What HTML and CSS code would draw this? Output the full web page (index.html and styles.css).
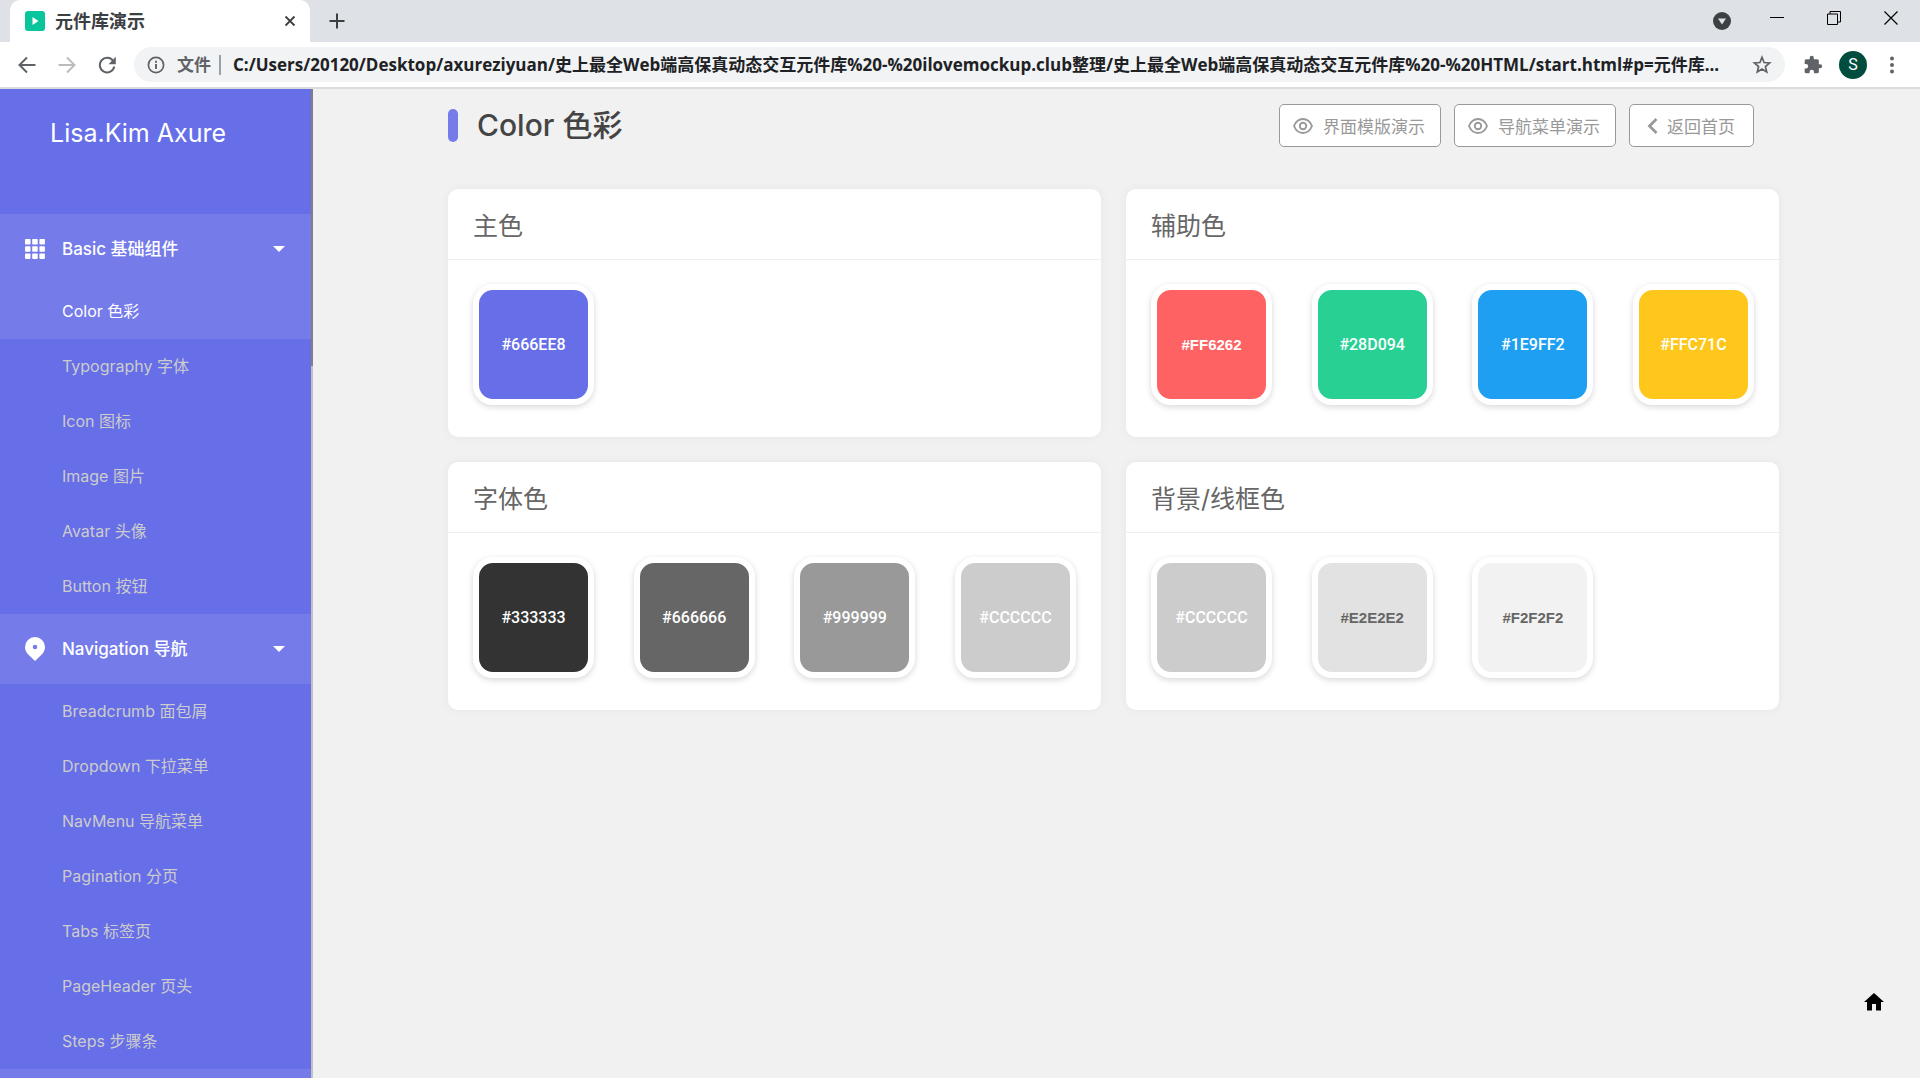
FILE: index.html
```html
<!DOCTYPE html>
<html lang="zh-CN">
<head>
<meta charset="utf-8">
<title>元件库演示</title>
<meta name="viewport" content="width=device-width, initial-scale=1">
<link rel="stylesheet" href="styles.css">
</head>
<body>
<header class="browser">
  <div class="tabstrip">
    <div class="tab">
      <svg class="favicon" width="20" height="20" viewBox="0 0 20 20" aria-hidden="true"><rect width="20" height="20" rx="3" fill="#08c59b"/><path d="M7.500 6l6 4-6 4z" fill="#fff"/></svg>
      <span class="tab-title">元件库演示</span>
      <button class="icon-btn tab-close" aria-label="关闭标签页"><svg width="12" height="12" viewBox="0 0 12 12"><path d="M1.500 1.500l9 9M10.500 1.500l-9 9" stroke="#3c4043" stroke-width="1.800"/></svg></button>
    </div>
    <button class="icon-btn new-tab" aria-label="新标签页"><svg width="16" height="16" viewBox="0 0 16 16"><path d="M8 .5v15M.5 8h15" stroke="#3c4043" stroke-width="2"/></svg></button>
    <div class="window-controls">
      <button class="icon-btn tab-search" aria-label="搜索标签页"><svg width="18" height="18" viewBox="0 0 18 18"><circle cx="9" cy="9" r="9" fill="#3c4043"/><path d="M5 6.500h8l-4 6z" fill="#dee1e6"/></svg></button>
      <button class="icon-btn raised" aria-label="最小化"><svg width="14" height="14" viewBox="0 0 14 14"><path d="M0 6.500h14" stroke="#000"/></svg></button>
      <button class="icon-btn raised" aria-label="还原"><svg width="14" height="14" viewBox="0 0 14 14" fill="none" stroke="#000"><path d="M.5 3h10v10.500h-10zM3 3V.5h10.500V11h-3"/></svg></button>
      <button class="icon-btn raised" aria-label="关闭"><svg width="14" height="14" viewBox="0 0 14 14"><path d="M.5.5l13 13M13.500.5l-13 13" stroke="#000" stroke-width="1.200"/></svg></button>
    </div>
  </div>
  <div class="toolbar">
    <div class="history">
      <button class="icon-btn" aria-label="后退"><svg width="18" height="18" viewBox="0 0 18 18" fill="none" stroke="#5f6368" stroke-width="2"><path d="M17.500 9H2M9 1.500L1.500 9 9 16.500"/></svg></button>
      <button class="icon-btn" aria-label="前进"><svg width="18" height="18" viewBox="0 0 18 18" fill="none" stroke="#babcbe" stroke-width="2"><path d="M.5 9H16M9 1.500L16.500 9 9 16.500"/></svg></button>
      <button class="icon-btn" aria-label="重新加载"><svg width="18" height="18" viewBox="0 0 18 18"><path d="M15.200 5A7.300 7.300 0 1 0 16.300 10.500" fill="none" stroke="#5f6368" stroke-width="2"/><path d="M17.800.8v7.400h-7.300z" fill="#5f6368"/></svg></button>
    </div>
    <div class="omnibox">
      <svg width="18" height="18" viewBox="0 0 18 18" fill="none" stroke="#5f6368" stroke-width="1.700" aria-hidden="true"><circle cx="9" cy="9" r="7.600"/><path d="M9 8v5M9 4.800v1.900" stroke-width="1.900"/></svg>
      <label class="scheme" for="url">文件</label>
      <input id="url" class="url" type="text" value="C:/Users/20120/Desktop/axureziyuan/史上最全Web端高保真动态交互元件库%20-%20ilovemockup.club整理/史上最全Web端高保真动态交互元件库%20-%20HTML/start.html#p=元件库...">
      <button class="icon-btn" aria-label="收藏"><svg width="20" height="20" viewBox="0 0 20 20" fill="none" stroke="#5f6368" stroke-width="1.700"><path d="M10 2.300l2.100 5.200 5.500.4-4.200 3.600 1.300 5.500-4.700-3-4.700 3 1.300-5.500-4.200-3.600 5.500-.4z"/></svg></button>
    </div>
    <div class="extras">
      <button class="icon-btn" aria-label="扩展程序"><svg width="20" height="20" viewBox="0 0 24 24" fill="#5f6368"><path d="M20.500 11H19V7a2 2 0 0 0-2-2h-4V3.500a2.500 2.500 0 0 0-5 0V5H4a2 2 0 0 0-2 2v3.800h1.500a2.700 2.700 0 0 1 0 5.400H2V20a2 2 0 0 0 2 2h3.800v-1.500a2.700 2.700 0 0 1 5.400 0V22H17a2 2 0 0 0 2-2v-4h1.500a2.500 2.500 0 0 0 0-5z"/></svg></button>
      <button class="profile" aria-label="个人资料">S</button>
      <button class="icon-btn" aria-label="菜单"><svg width="18" height="18" viewBox="0 0 18 18" fill="#5f6368"><circle cx="9" cy="2.500" r="2"/><circle cx="9" cy="9" r="2"/><circle cx="9" cy="15.500" r="2"/></svg></button>
    </div>
  </div>
</header>

<div class="app">
  <aside class="sidebar">
    <div class="brand">Lisa.Kim Axure</div>
    <nav>
      <button class="group">
        <svg width="20" height="20" viewBox="0 0 20 20" fill="#fff" aria-hidden="true"><rect width="5.500" height="5.500" rx=".8"/><rect x="7.200" width="5.500" height="5.500" rx=".8"/><rect x="14.400" width="5.500" height="5.500" rx=".8"/><rect y="7.200" width="5.500" height="5.500" rx=".8"/><rect x="7.200" y="7.200" width="5.500" height="5.500" rx=".8"/><rect x="14.400" y="7.200" width="5.500" height="5.500" rx=".8"/><rect y="14.400" width="5.500" height="5.500" rx=".8"/><rect x="7.200" y="14.400" width="5.500" height="5.500" rx=".8"/><rect x="14.400" y="14.400" width="5.500" height="5.500" rx=".8"/></svg>
        <span class="group-name">Basic 基础组件</span>
        <span class="caret"></span>
      </button>
      <a class="item active" href="#color">Color 色彩</a>
      <a class="item" href="#typography">Typography 字体</a>
      <a class="item" href="#icon">Icon 图标</a>
      <a class="item" href="#image">Image 图片</a>
      <a class="item" href="#avatar">Avatar 头像</a>
      <a class="item" href="#button">Button 按钮</a>
      <button class="group">
        <svg width="20" height="24" viewBox="0 0 20 24" aria-hidden="true"><path fill="#fff" fill-rule="evenodd" d="M10 0a10 10 0 0 1 10 10c0 3.200-1.300 5.300-3 7.200L10 24l-7-6.800C1.300 15.300 0 13.200 0 10A10 10 0 0 1 10 0zm0 7.700a2.300 2.300 0 1 0 0 4.600 2.300 2.300 0 0 0 0-4.600z"/></svg>
        <span class="group-name">Navigation 导航</span>
        <span class="caret"></span>
      </button>
      <a class="item" href="#breadcrumb">Breadcrumb 面包屑</a>
      <a class="item" href="#dropdown">Dropdown 下拉菜单</a>
      <a class="item" href="#navmenu">NavMenu 导航菜单</a>
      <a class="item" href="#pagination">Pagination 分页</a>
      <a class="item" href="#tabs">Tabs 标签页</a>
      <a class="item" href="#pageheader">PageHeader 页头</a>
      <a class="item" href="#steps">Steps 步骤条</a>
      <div class="group"></div>
    </nav>
  </aside>
  <div class="scroll-track"><div class="scroll-thumb"></div></div>

  <main class="content">
    <div class="page-head">
      <h1>Color 色彩</h1>
      <div class="actions">
        <button class="action"><svg width="20" height="16" viewBox="0 0 20 16" fill="none" stroke="#999" stroke-width="1.900" aria-hidden="true"><path d="M1 8c1.800-4.400 5-7 9-7s7.200 2.600 9 7c-1.800 4.400-5 7-9 7S2.800 12.400 1 8z"/><circle cx="10" cy="8" r="3.200"/></svg>界面模版演示</button>
        <button class="action"><svg width="20" height="16" viewBox="0 0 20 16" fill="none" stroke="#999" stroke-width="1.900" aria-hidden="true"><path d="M1 8c1.800-4.400 5-7 9-7s7.200 2.600 9 7c-1.800 4.400-5 7-9 7S2.800 12.400 1 8z"/><circle cx="10" cy="8" r="3.200"/></svg>导航菜单演示</button>
        <button class="action back"><svg width="11" height="16" viewBox="0 0 11 16" fill="none" stroke="#999" stroke-width="2.800" aria-hidden="true"><path d="M9.500 1L2.500 8l7 7"/></svg>返回首页</button>
      </div>
    </div>
    <div class="cards">
      <section class="card">
        <h2>主色</h2>
        <div class="swatches">
          <div class="swatch primary">#666EE8</div>
        </div>
      </section>
      <section class="card">
        <h2>辅助色</h2>
        <div class="swatches">
          <div class="swatch danger bold">#FF6262</div>
          <div class="swatch success">#28D094</div>
          <div class="swatch info">#1E9FF2</div>
          <div class="swatch warning">#FFC71C</div>
        </div>
      </section>
      <section class="card">
        <h2>字体色</h2>
        <div class="swatches">
          <div class="swatch gray-3">#333333</div>
          <div class="swatch gray-6">#666666</div>
          <div class="swatch gray-9">#999999</div>
          <div class="swatch gray-c">#CCCCCC</div>
        </div>
      </section>
      <section class="card">
        <h2>背景/线框色</h2>
        <div class="swatches">
          <div class="swatch gray-c">#CCCCCC</div>
          <div class="swatch gray-e bold dark">#E2E2E2</div>
          <div class="swatch gray-f bold dark">#F2F2F2</div>
        </div>
      </section>
    </div>
  </main>
  <a class="home" href="#home" aria-label="首页"><svg width="20" height="18" viewBox="0 0 20 18"><path d="M10 0l10 9h-3v8.500h-5V11H8v6.500H3V9H0z" fill="#000"/></svg></a>
</div>
</body>
</html>
```
FILE: styles.css
```css
* { box-sizing: border-box; }

body {
  margin: 0;
  height: 100vh;
  display: flex;
  flex-direction: column;
  overflow: hidden;
  background: #f1f1f1;
  font-family: Inter, "Noto Sans CJK SC", sans-serif;
}

button {
  padding: 0;
  border: 0;
  background: none;
  font: inherit;
  color: inherit;
  cursor: pointer;
}

svg { display: block; flex: none; }
a { text-decoration: none; }

.icon-btn { display: flex; flex: none; }

/* Browser frame */
.browser {
  flex: none;
  border-bottom: 2px solid #d9dbdf;
  background: #fff;
  font-family: "Open Sans", "Noto Sans CJK SC", sans-serif;
}

.tabstrip {
  display: flex;
  align-items: center;
  height: 42px;
  padding: 0 22px 0 10px;
  background: #dee1e6;
}

.tab {
  display: flex;
  align-items: center;
  gap: 10px;
  width: 300px;
  height: 42px;
  padding: 0 14px 0 15px;
  border-radius: 10px 10px 0 0;
  background: #fff;
}

.tab-title {
  flex: 1;
  font-size: 18px;
  font-weight: 700;
  line-height: 24px;
  color: #3c4043;
}

.new-tab { margin-left: 19px; }

.window-controls {
  display: flex;
  align-items: center;
  gap: 43px;
  margin-left: auto;
}

.tab-search { margin-right: -4px; }
.raised { padding-bottom: 6px; }

.toolbar {
  display: flex;
  align-items: center;
  gap: 18px;
  height: 45px;
  padding: 0 19px 0 18px;
}

.history { display: flex; gap: 22px; }

.extras {
  display: flex;
  align-items: center;
  gap: 16px;
}

.omnibox {
  flex: 1;
  display: flex;
  align-items: center;
  gap: 12px;
  min-width: 0;
  height: 35px;
  padding: 0 13px;
  border-radius: 18px;
  background: #f1f3f4;
}

.scheme {
  padding-right: 8px;
  border-right: 2px solid #9aa0a6;
  font-size: 17px;
  font-weight: 700;
  line-height: 20px;
  color: #5f6368;
}

.url {
  flex: 1;
  min-width: 0;
  padding: 0;
  border: 0;
  outline: 0;
  background: none;
  font: 700 17px/24px "Open Sans", "Noto Sans CJK SC", sans-serif;
  color: #202124;
}

.profile {
  flex: none;
  width: 28px;
  height: 28px;
  border-radius: 50%;
  background: #004d40;
  color: #fff;
  font-family: Roboto, sans-serif;
  font-size: 16px;
  line-height: 28px;
}

/* Application */
.app {
  flex: 1;
  display: flex;
  min-height: 0;
  position: relative;
}

.sidebar {
  flex: none;
  width: 311px;
  overflow: hidden;
  background: #666ee8;
  color: #fff;
}

.brand {
  height: 125px;
  padding: 28px 50px;
  font-size: 25px;
  line-height: 32px;
}

.group {
  display: flex;
  align-items: center;
  gap: 17px;
  width: 100%;
  height: 70px;
  padding: 0 26px 0 25px;
  background: #757be9;
  text-align: left;
}

.group-name {
  flex: 1;
  font-size: 17px;
  font-weight: 500;
  line-height: 24px;
}

.caret {
  border: 6px solid transparent;
  border-top-color: #fff;
  border-bottom: 0;
}

.item {
  display: block;
  height: 55px;
  padding-left: 62px;
  font-size: 16px;
  line-height: 55px;
  color: #ccc;
}

.item.active { background: #757be9; color: #fff; }

.scroll-track { flex: none; width: 2px; background: #c1c1c1; }
.scroll-thumb { height: 28%; background: #808080; }

.content {
  flex: 1;
  min-width: 0;
  padding: 15px 141px 0 135px;
}

.page-head {
  display: flex;
  align-items: center;
  justify-content: space-between;
  height: 43px;
  padding-right: 25px;
  margin-bottom: 42px;
}

h1 {
  display: flex;
  align-items: center;
  gap: 19px;
  margin: 0;
  font-size: 30px;
  font-weight: 500;
  line-height: 45px;
  color: #444;
}

h1::before {
  content: "";
  width: 10px;
  height: 33px;
  border-radius: 5px;
  background: #757be9;
}

.actions { display: flex; gap: 13px; }

.action {
  display: flex;
  align-items: center;
  gap: 10px;
  height: 43px;
  padding: 0 15px 0 13px;
  border: 1px solid #999;
  border-radius: 5px;
  background: #fff;
  font-size: 17px;
  color: #999;
}

.action.back { gap: 9px; padding: 0 18px 0 17px; }

.cards {
  display: grid;
  grid-template-columns: 1fr 1fr;
  gap: 25px;
}

.card {
  border-radius: 10px;
  background: #fff;
  box-shadow: 0 0 10px rgba(0, 0, 0, .05);
}

.card h2 {
  margin: 0;
  padding: 20px 25px 15px;
  border-bottom: 1px solid #eee;
  font-size: 25px;
  font-weight: 400;
  line-height: 35px;
  color: #666;
}

.swatches {
  display: grid;
  grid-template-columns: repeat(4, 121px);
  justify-content: space-between;
  padding: 24px 25px 32px;
}

.swatch {
  height: 121px;
  border: 6px solid #fff;
  border-radius: 20px;
  box-shadow: 0 2px 6px rgba(0, 0, 0, .16);
  font-family: Roboto, sans-serif;
  font-size: 16px;
  font-weight: 500;
  line-height: 109px;
  text-align: center;
  color: #fff;
}

.swatch.bold {
  font-family: "Liberation Sans", sans-serif;
  font-size: 15px;
  font-weight: 700;
}

.swatch.dark { color: #666; }

.primary { background: #666ee8; }
.danger { background: #ff6262; }
.success { background: #28d094; }
.info { background: #1e9ff2; }
.warning { background: #ffc71c; }
.gray-3 { background: #333; }
.gray-6 { background: #666; }
.gray-9 { background: #999; }
.gray-c { background: #ccc; }
.gray-e { background: #e2e2e2; }
.gray-f { background: #f2f2f2; }

.home {
  position: absolute;
  right: 36px;
  bottom: 67px;
}
```
